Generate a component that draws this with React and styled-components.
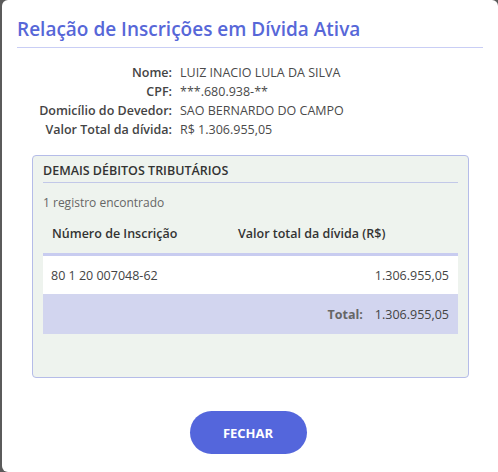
import styled, { createGlobalStyle } from "styled-components"

const Global = createGlobalStyle`
  html, body {
    margin: 0;
    padding: 0;
    background: #5b5b5b;
    height: 100%;
  }
  body {
    font-family: "Open Sans", "Liberation Sans", sans-serif;
  }
`;

const info = [
  ["Nome:", "LUIZ INACIO LULA DA SILVA"],
  ["CPF:", "***.680.938-**"],
  ["Domicílio do Devedor:", "SAO BERNARDO DO CAMPO"],
  ["Valor Total da dívida:", "R$ 1.306.955,05"],
];

export default function App() {
  return (
    <>
      <Global />
      <Modal>
        <Title>Relação de Inscrições em Dívida Ativa</Title>
        <InfoGrid>
          {info.map(([k, v]) => (
            <InfoRow key={k}>
              <Label>{k}</Label>
              <Value>{v}</Value>
            </InfoRow>
          ))}
        </InfoGrid>
        <Panel>
          <PanelTitle>DEMAIS DÉBITOS TRIBUTÁRIOS</PanelTitle>
          <Count>1 registro encontrado</Count>
          <Table>
            <thead>
              <tr>
                <Th $w="168px">Número de Inscrição</Th>
                <Th>Valor total da dívida (R$)</Th>
              </tr>
            </thead>
            <tbody>
              <Tr>
                <Td>80 1 20 007048-62</Td>
                <Td $right>1.306.955,05</Td>
              </Tr>
            </tbody>
            <tfoot>
              <TotalRow>
                <Td $h="40px" />
                <Td $h="40px" $right>
                  <TotalLabel>Total:</TotalLabel>1.306.955,05
                </Td>
              </TotalRow>
            </tfoot>
          </Table>
        </Panel>
        <Footer>
          <Button>FECHAR</Button>
        </Footer>
      </Modal>
    </>
  )
}

const Modal = styled.div`
  margin-left: 2px;
  width: 496px;
  height: 472px;
  background: #fff;
  border-radius: 6px 6px 0 6px;
  box-sizing: border-box;
  padding: 17px 15px 0 15px;
  display: flex;
  flex-direction: column;
`;

const Title = styled.h2`
  margin: 0;
  font-size: 19px;
  font-weight: 600;
  color: #5767d8;
  padding-bottom: 6px;
  border-bottom: 1px solid #c9cef5;
  line-height: 24px;
`;

const InfoGrid = styled.div`
  display: flex;
  flex-direction: column;
  margin-top: 15px;
`;

const InfoRow = styled.div`
  display: grid;
  grid-template-columns: 155px 1fr;
  column-gap: 8px;
  font-size: 12.5px;
  line-height: 19px;
  color: #444;
`;

const Label = styled.span`
  text-align: right;
  font-weight: 600;
  color: #444;
`;

const Value = styled.span`
  color: #4a4a4a;
`;

const Panel = styled.div`
  margin: 16px 14px 0 15px;
  height: 223px;
  box-sizing: border-box;
  background: #eef3ee;
  border: 1px solid #b5bce8;
  border-radius: 4px;
  padding: 6px 10px 0 10px;
`;

const PanelTitle = styled.div`
  font-size: 12.5px;
  font-weight: 600;
  color: #333;
  line-height: 18px;
  padding-bottom: 2px;
  border-bottom: 1px solid #c2c8e8;
`;

const Count = styled.div`
  font-size: 12px;
  color: #666;
  margin-top: 12px;
  line-height: 16px;
`;

const Table = styled.table`
  width: 100%;
  border-collapse: collapse;
  margin-top: 9px;
  font-size: 12.5px;
  color: #444;
`;

const Th = styled.th`
  width: ${(p) => p.$w || "auto"};
  text-align: left;
  font-weight: 600;
  color: #333;
  padding: 6px 9px 11px 9px;
  border-bottom: 3px solid #c8ccf0;
  line-height: 16px;
`;

const Tr = styled.tr`
  background: #fff;
`;

const TotalRow = styled.tr`
  background: #d2d5ef;
`;

const Td = styled.td`
  height: ${(p) => p.$h || "38px"};
  padding: 0 9px 0 8px;
  text-align: ${(p) => (p.$right ? "right" : "left")};
  color: #444;
  white-space: nowrap;
`;

const TotalLabel = styled.span`
  font-weight: 700;
  color: #666;
  margin-right: 12px;
`;

const Footer = styled.div`
  display: flex;
  justify-content: center;
  margin-top: 33px;
  padding-right: 4px;
`;

const Button = styled.button`
  width: 117px;
  height: 43px;
  border: none;
  border-radius: 22px;
  background: #5466dc;
  color: #fff;
  font-family: "Open Sans", "Liberation Sans", sans-serif;
  font-size: 13px;
  font-weight: 700;
  cursor: pointer;
`;
